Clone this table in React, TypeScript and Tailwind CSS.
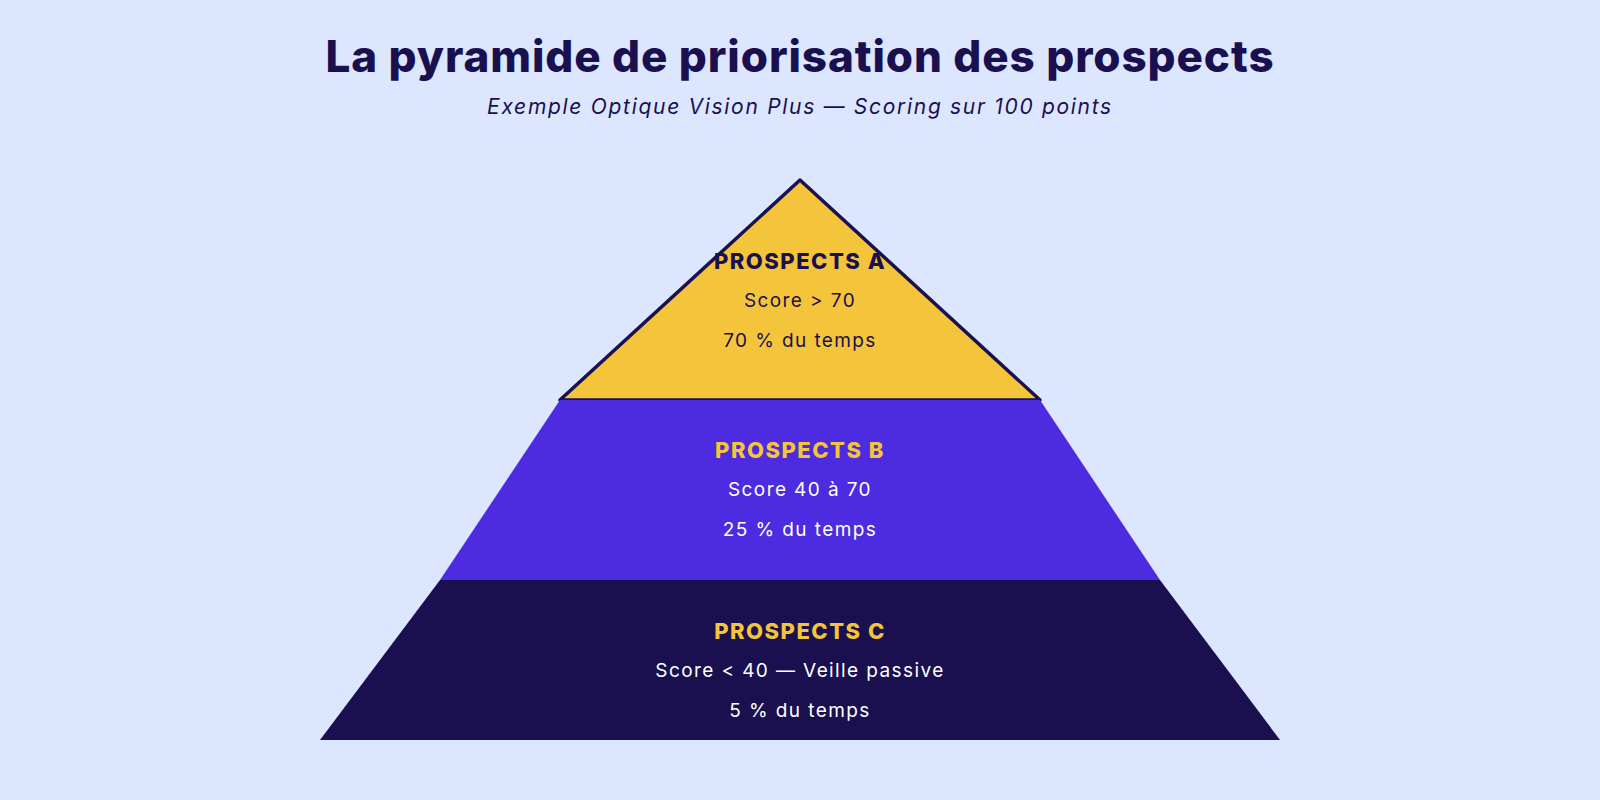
import React from 'react';

const font = { fontFamily: '"Inter", "Noto Sans", sans-serif' };

interface LayerTextProps {
    title: string;
    titleClass: string;
    lines: string[];
    lineClass: string;
}

const LayerText: React.FC<LayerTextProps> = ({ title, titleClass, lines, lineClass }) => (
    <div className="relative flex flex-col items-center">
        <div className={`text-[22px] font-extrabold uppercase leading-[40px] tracking-[1.5px] ${titleClass}`}>{title}</div>
        {lines.map((l) => (
            <div key={l} className={`text-[19px] leading-[40px] tracking-[1.4px] ${lineClass}`}>{l}</div>
        ))}
    </div>
);

export default function App() {
    return (
        <div className="w-full min-h-screen bg-[#dce6fe] flex flex-col items-center pt-[28px]" style={font}>
            <h1 className="text-[44px] leading-[56px] font-extrabold text-[#1a1050] tracking-[0.9px]">
                La pyramide de priorisation des prospects
            </h1>
            <p className="mt-[9px] text-[21px] leading-[28px] italic text-[#1a1050] tracking-[1.7px]">
                Exemple Optique Vision Plus — Scoring sur 100 points
            </p>

            <div className="mt-[59px] flex flex-col items-center">
                {/* top triangle */}
                <div className="relative w-[480px] h-[220px] flex flex-col items-center pt-[61px]">
                    <svg className="absolute inset-0 overflow-visible" width="480" height="220" viewBox="0 0 480 220">
                        <polygon
                            points="240,0 0,220 480,220"
                            fill="#f4c53a"
                            stroke="#1a1050"
                            strokeWidth="3.5"
                            strokeLinejoin="round"
                        />
                    </svg>
                    <LayerText
                        title="Prospects A"
                        titleClass="text-[#1a1050]"
                        lines={['Score > 70', '70 % du temps']}
                        lineClass="text-[#1a1050]"
                    />
                </div>

                {/* middle */}
                <div className="w-[720px] h-[180px] bg-[#4c2be0] [clip-path:polygon(16.667%_0,83.333%_0,100%_100%,0_100%)] flex flex-col items-center pt-[30px]">
                    <LayerText
                        title="Prospects B"
                        titleClass="text-[#f4c53a]"
                        lines={['Score 40 à 70', '25 % du temps']}
                        lineClass="text-white"
                    />
                </div>

                {/* bottom */}
                <div className="w-[960px] h-[160px] bg-[#1a104f] [clip-path:polygon(12.5%_0,87.5%_0,100%_100%,0_100%)] flex flex-col items-center pt-[31px]">
                    <LayerText
                        title="Prospects C"
                        titleClass="text-[#f4c53a]"
                        lines={['Score < 40 — Veille passive', '5 % du temps']}
                        lineClass="text-white"
                    />
                </div>
            </div>
        </div>
    );
}
